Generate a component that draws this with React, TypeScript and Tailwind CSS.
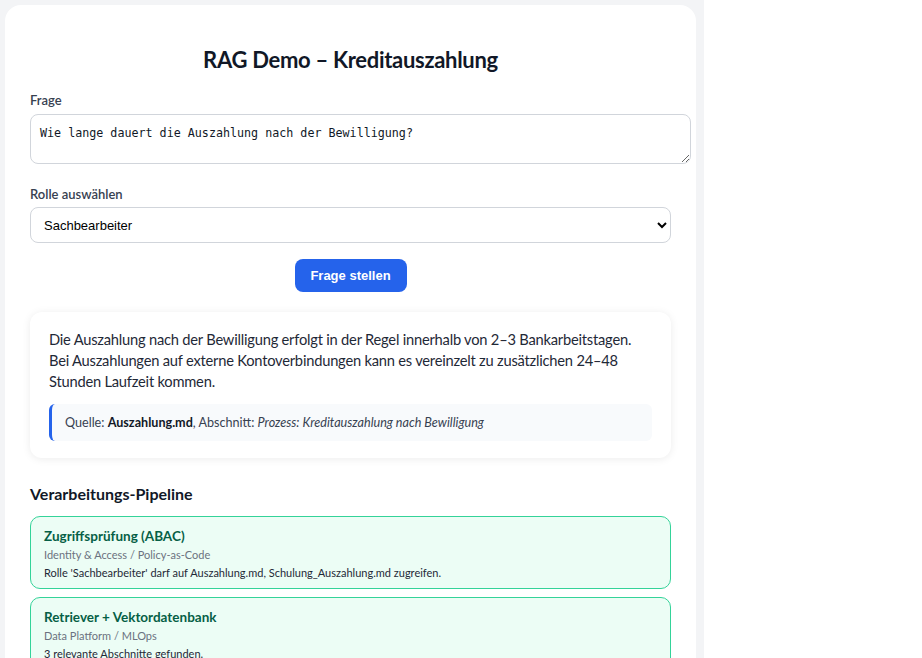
import React, { useState } from 'react';

const steps = [
  {
    title: 'Zugriffsprüfung (ABAC)',
    team: 'Identity & Access / Policy-as-Code',
    detail: "Rolle 'Sachbearbeiter' darf auf Auszahlung.md, Schulung_Auszahlung.md zugreifen.",
  },
  {
    title: 'Retriever + Vektordatenbank',
    team: 'Data Platform / MLOps',
    detail: '3 relevante Abschnitte gefunden.',
  },
  {
    title: 'LLM-Antwortgenerierung',
    team: 'AI Engineering',
    detail: 'Antwort aus Kontext generiert.',
  },
];

export default function App() {
  const [frage, setFrage] = useState('Wie lange dauert die Auszahlung nach der Bewilligung?');
  const [rolle, setRolle] = useState('Sachbearbeiter');

  return (
    <div className="h-[658px] overflow-hidden bg-white">
      <div className="w-[704px] min-h-[658px] bg-[#f3f4f6] pl-[5px] pt-[5px] font-['Lato',sans-serif] text-[#111827]">
        <div className="w-[691px] rounded-[16px] bg-white px-[25px] pt-[40px] pb-8">
          <h1 className="text-center text-[22px] font-bold leading-[30px] tracking-[-0.3px]">RAG Demo – Kreditauszahlung</h1>

          {/* Frage */}
          <label className="mt-[16px] block text-[13px] font-semibold leading-[18px] text-[#374151]">Frage</label>
          <textarea
            value={frage}
            onChange={(e) => setFrage(e.target.value)}
            className="mt-[5px] box-content block h-[28px] w-full rounded-[8px] border border-[#d1d5db] px-[9px] py-[10px] font-['DejaVu_Sans_Mono',monospace] text-[11.7px] leading-[16px] text-[#111827] outline-none"
          />

          {/* Rolle */}
          <label className="mt-[21px] block text-[13px] font-semibold leading-[18px] text-[#374151]">
            Rolle auswählen
          </label>
          <select
            value={rolle}
            onChange={(e) => setRolle(e.target.value)}
            className="mt-[4px] block h-[36px] w-full rounded-[8px] border border-[#d1d5db] bg-white px-[9px] font-['Liberation_Sans',sans-serif] text-[13px] text-black outline-none"
          >
            <option>Sachbearbeiter</option>
            <option>Teamleiter</option>
            <option>Auszubildender</option>
          </select>

          <div className="mt-4 flex justify-center">
            <button className="h-[33px] w-[112px] rounded-[8px] bg-[#2563eb] font-['Liberation_Sans',sans-serif] text-[13px] font-bold text-white">
              Frage stellen
            </button>
          </div>

          {/* Antwort */}
          <div className="mt-[20px] rounded-[12px] bg-white px-[19px] pt-[17px] pb-[17px] shadow-[0_1px_8px_rgba(0,0,0,0.08)]">
            <p className="text-[14.7px] leading-[21px] tracking-[-0.22px] text-[#1f2937]">
              Die Auszahlung nach der Bewilligung erfolgt in der Regel innerhalb von 2–3 Bankarbeitstagen.
              <br />
              Bei Auszahlungen auf externe Kontoverbindungen kann es vereinzelt zu zusätzlichen 24–48 Stunden Laufzeit
              kommen.
            </p>
            <div className="mt-[12px] rounded-[6px] border-l-[3px] border-[#2563eb] bg-[#f8fafc] px-[13px] py-[10px] text-[12.6px] leading-[17px] text-[#374151]">
              Quelle: <strong className="font-bold text-[#111827]">Auszahlung.md</strong>, Abschnitt:{' '}
              <em>Prozess: Kreditauszahlung nach Bewilligung</em>
            </div>
          </div>

          {/* Pipeline */}
          <h2 className="mt-[26px] text-[16px] font-bold leading-[20px]">Verarbeitungs-Pipeline</h2>
          <div className="mt-[12px] flex flex-col gap-[8px]">
            {steps.map((s) => (
              <div key={s.title} className="rounded-[10px] border border-[#34d399] bg-[#ecfdf5] px-[13px] pt-[10px] pb-[7px]">
                <div className="text-[13.5px] font-bold leading-[18px] text-[#065f46]">{s.title}</div>
                <div className="mt-[1px] text-[11px] leading-[17px] text-[#6b7280]">{s.team}</div>
                <div className="mt-[2px] text-[11px] leading-[16px] text-[#1f2937]">{s.detail}</div>
              </div>
            ))}
          </div>
        </div>
      </div>
    </div>
  );
}
